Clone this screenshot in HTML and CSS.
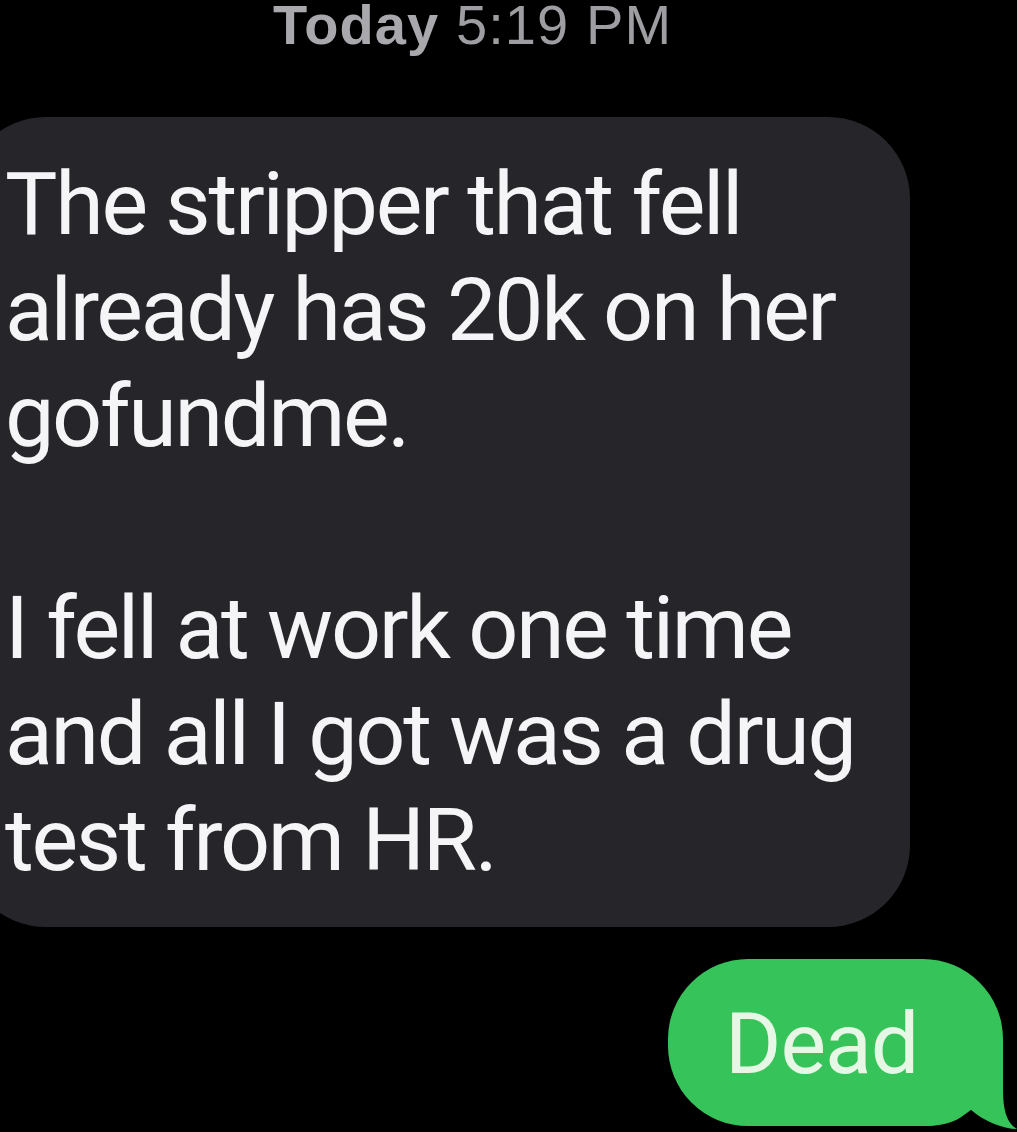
FILE: index.html
```html
<!DOCTYPE html>
<html>
<head>
<meta charset="utf-8">
<link rel="stylesheet" href="styles.css">
</head>
<body>
<div class="thread">
  <div class="stamp"><b>Today</b> 5:19 PM</div>
  <div class="row-in">
    <div class="bubble-in">
      <p>The stripper that fell<br>already has 20k on her<br>gofundme.</p>
      <p class="gap">I fell at work one time<br>and all I got was a drug<br>test from HR.</p>
    </div>
  </div>
  <div class="row-out">
    <div class="bubble-out">
      <span>Dead</span>
      <svg class="tail" width="92" height="92" viewBox="0 0 92 92"><path d="M0,0 H78 V50 C78,72 82,84 92,90 C78,90 58,82 45,70 C35,82 20,87 0,87 Z" fill="#36c45a"/></svg>
    </div>
  </div>
</div>
</body>
</html>
```

FILE: styles.css
```css
html, body {
  margin: 0;
  padding: 0;
  background: #000;
  width: 1017px;
  height: 1132px;
  overflow: hidden;
}
.thread {
  font-family: "Liberation Sans", Arial, sans-serif;
  display: flex;
  flex-direction: column;
}
.stamp {
  margin-top: 1px;
  margin-left: 273px;
  font-size: 56px;
  line-height: 48px;
  letter-spacing: 1.1px;
  color: #9d9da2;
  white-space: nowrap;
}
.stamp b {
  font-weight: 700;
  color: #a9a9ad;
}
.row-in {
  margin-top: 68px;
  display: flex;
}
.bubble-in {
  margin-left: -36px;
  width: 946px;
  box-sizing: border-box;
  padding: 34px 0 34px 41px;
  background: #26262a;
  border-radius: 82px;
  color: #f5f5f7;
  font-family: Roboto, "Liberation Sans", sans-serif;
  font-size: 88px;
  line-height: 106px;
  letter-spacing: -2.3px;
}
.bubble-in p {
  margin: 0;
  white-space: nowrap;
}
.bubble-in p.gap {
  margin-top: 106px;
}
.row-out {
  margin-top: 32px;
  display: flex;
  justify-content: flex-end;
  padding-right: 14px;
}
.bubble-out {
  position: relative;
  width: 335px;
  height: 167px;
  box-sizing: border-box;
  padding: 35px 0 0 57px;
  background: #36c45a;
  border-radius: 80px;
  color: #e6f7e6;
  font-family: Roboto, "Liberation Sans", sans-serif;
  font-size: 86px;
  line-height: 100px;
  letter-spacing: -1px;
}
.tail {
  position: absolute;
  right: -14px;
  bottom: -5px;
  display: block;
}
```
